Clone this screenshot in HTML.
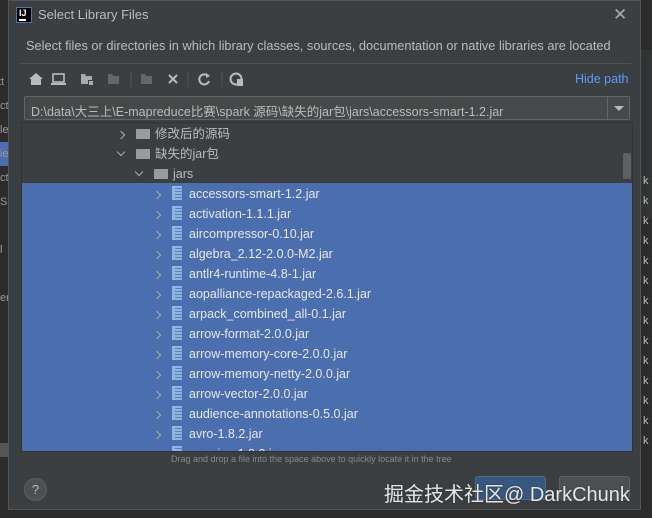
<!DOCTYPE html>
<html><head><meta charset="utf-8"><style>
*{margin:0;padding:0;box-sizing:border-box}
body{width:652px;height:518px;background:#2b2b2b;overflow:hidden;position:relative;font-family:"Liberation Sans","Noto Sans CJK SC",sans-serif;color:#bbbbbb}
.dlg{position:absolute;left:8px;top:0;width:633px;height:510px;background:#3c3f41;border:1px solid #555}
.abs{position:absolute}
.row{position:absolute;height:20px;line-height:20px;font-size:12.5px;color:#bbbbbb;white-space:nowrap}
.sel{color:#e8e8e8}
.chev{display:inline-block;width:6px;height:6px;border-right:1.5px solid #aaa;border-bottom:1.5px solid #aaa;transform:rotate(-45deg);margin-right:12px}
.chev.d{transform:rotate(45deg);margin-bottom:3px}
.fold{display:inline-block;width:14px;height:10px;background:#9a9a9a;margin-right:5px;vertical-align:-1px;border-top-left-radius:1px}
.jar{display:inline-block;width:10px;height:14px;background:repeating-linear-gradient(0deg,#8fb4e0 0 2px,#5a80c0 2px 3px);border-left:3px solid #8fb4e0;margin-right:7px;vertical-align:-2px}
.k{position:absolute;left:643px;font-size:11px;color:#bbb}
</style></head><body>
<div class="abs" style="left:0;top:70px;font-size:11px;color:#999;line-height:24px">
<div style="margin-left:-2px">tt</div><div>ct</div><div>le</div><div style="background:#4b6eaf;width:8px">ie</div><div>ct</div><div>Se</div><div>&nbsp;</div><div>l</div><div>&nbsp;</div><div>er</div></div>
<div class="abs" style="left:0;top:443px;width:8px;height:14px;background:#555"></div>
<div class="abs" style="left:641px;top:50px;width:11px;height:168px;background:#313335"></div>
<div class="k" style="top:175px">k</div><div class="k" style="top:195px">k</div><div class="k" style="top:215px">k</div><div class="k" style="top:235px">k</div><div class="k" style="top:255px">k</div><div class="k" style="top:275px">k</div><div class="k" style="top:295px">k</div><div class="k" style="top:315px">k</div><div class="k" style="top:335px">k</div><div class="k" style="top:355px">k</div><div class="k" style="top:375px">k</div><div class="k" style="top:395px">k</div><div class="k" style="top:415px">k</div><div class="k" style="top:435px">k</div>
<div class="dlg">
 <div class="abs" style="left:7px;top:6px;width:16px;height:16px;background:#000;border:1px solid #4a78b5;color:#fff;font-size:9px;font-weight:bold;line-height:10px;padding-left:2px">IJ<div style="width:7px;height:1.5px;background:#fff;margin-top:1px"></div></div>
 <div class="abs" style="left:29px;top:6px;font-size:13px;color:#bbb">Select Library Files</div>
 <div class="abs" style="left:604px;top:4px;font-size:17px;color:#aaa">✕</div>
 <div class="abs" style="left:17px;top:37px;font-size:12.8px;color:#bbb;white-space:nowrap">Select files or directories in which library classes, sources, documentation or native libraries are located</div>
 <div class="abs" style="left:12px;top:62px;width:610px;height:1px;background:#515151"></div>
 <svg class="abs" style="left:18px;top:69px" width="240" height="18">
  <path d="M2 9 L9 3 L16 9 H14 V15 H4 V9Z" fill="#bbb"/>
  <rect x="26" y="4" width="11" height="8" fill="none" stroke="#bbb" stroke-width="1.6"/><rect x="24" y="13" width="15" height="2" fill="#bbb"/>
  <path d="M54 4h4l1 2h6v8h-11z" fill="#aaa"/><rect x="61" y="10" width="5" height="5" fill="#3c3f41"/><rect x="62" y="11" width="4" height="4" fill="#aaa"/>
  <path d="M81 4h4l1 2h6v8h-11z" fill="#666"/>
  <line x1="104" y1="2" x2="104" y2="17" stroke="#555"/>
  <path d="M114 4h4l1 2h6v8h-11z" fill="#666"/>
  <path d="M142 5l8 8M150 5l-8 8" stroke="#bbb" stroke-width="2"/>
  <line x1="161" y1="2" x2="161" y2="17" stroke="#555"/>
  <path d="M181 6a5 5 0 1 0 1 5" fill="none" stroke="#bbb" stroke-width="2"/><path d="M179 3l4 3-4 2z" fill="#bbb"/>
  <line x1="195" y1="2" x2="195" y2="17" stroke="#555"/>
  <circle cx="209" cy="9" r="5.5" fill="none" stroke="#bbb" stroke-width="2"/><rect x="210" y="9" width="6" height="7" fill="#bbb"/>
 </svg>
 <div class="abs" style="left:566px;top:71px;font-size:12.5px;color:#589df6">Hide path</div>
 <div class="abs" style="left:15px;top:95px;width:606px;height:24px;background:#45494a;border:1px solid #646464;border-radius:2px"><div style="position:absolute;left:6px;top:4px;font-size:12.5px;color:#bbb;white-space:nowrap">D:\data\大三上\E-mapreduce比赛\spark 源码\缺失的jar包\jars\accessors-smart-1.2.jar</div><div style="position:absolute;right:0;top:0;width:22px;height:22px;border-left:1px solid #646464"><div style="position:absolute;left:6px;top:9px;border:5px solid transparent;border-top:5px solid #bbb"></div></div></div>
 <div class="abs" style="left:12px;top:121px;width:612px;height:330px;background:#3c3f41;border:1px solid #323232;overflow:hidden">
  <div class="abs" style="left:0;top:60px;width:612px;height:270px;background:#4b6eaf"></div>
  <div class="abs" style="left:601px;top:30px;width:8px;height:26px;background:#5e6163;border-radius:2px"></div>
  <div class="row" style="left:96px;top:1px"><span class="chev"></span><span class="fold"></span>修改后的源码</div>
  <div class="row" style="left:96px;top:21px"><span class="chev d"></span><span class="fold"></span>缺失的jar包</div>
  <div class="row" style="left:114px;top:41px"><span class="chev d"></span><span class="fold"></span>jars</div>
  <div class="row sel" style="left:132px;top:61px"><span class="chev"></span><span class="jar"></span>accessors-smart-1.2.jar</div>
  <div class="row sel" style="left:132px;top:81px"><span class="chev"></span><span class="jar"></span>activation-1.1.1.jar</div>
  <div class="row sel" style="left:132px;top:101px"><span class="chev"></span><span class="jar"></span>aircompressor-0.10.jar</div>
  <div class="row sel" style="left:132px;top:121px"><span class="chev"></span><span class="jar"></span>algebra_2.12-2.0.0-M2.jar</div>
  <div class="row sel" style="left:132px;top:141px"><span class="chev"></span><span class="jar"></span>antlr4-runtime-4.8-1.jar</div>
  <div class="row sel" style="left:132px;top:161px"><span class="chev"></span><span class="jar"></span>aopalliance-repackaged-2.6.1.jar</div>
  <div class="row sel" style="left:132px;top:181px"><span class="chev"></span><span class="jar"></span>arpack_combined_all-0.1.jar</div>
  <div class="row sel" style="left:132px;top:201px"><span class="chev"></span><span class="jar"></span>arrow-format-2.0.0.jar</div>
  <div class="row sel" style="left:132px;top:221px"><span class="chev"></span><span class="jar"></span>arrow-memory-core-2.0.0.jar</div>
  <div class="row sel" style="left:132px;top:241px"><span class="chev"></span><span class="jar"></span>arrow-memory-netty-2.0.0.jar</div>
  <div class="row sel" style="left:132px;top:261px"><span class="chev"></span><span class="jar"></span>arrow-vector-2.0.0.jar</div>
  <div class="row sel" style="left:132px;top:281px"><span class="chev"></span><span class="jar"></span>audience-annotations-0.5.0.jar</div>
  <div class="row sel" style="left:132px;top:301px"><span class="chev"></span><span class="jar"></span>avro-1.8.2.jar</div>
  <div class="row sel" style="left:132px;top:321px"><span class="chev"></span><span class="jar"></span>avro-ipc-1.8.2.jar</div>
 </div>
 <div class="abs" style="left:162px;top:453px;font-size:9px;color:#888;white-space:nowrap">Drag and drop a file into the space above to quickly locate it in the tree</div>
 <div class="abs" style="left:15px;top:477px;width:23px;height:23px;border-radius:50%;background:#4c5052;border:1px solid #5e6060;color:#bbb;font-size:13px;text-align:center;line-height:21px">?</div>
 <div class="abs" style="left:466px;top:475px;width:71px;height:24px;background:#365880;border:1px solid #4c708c;border-radius:3px"></div>
 <div class="abs" style="left:550px;top:475px;width:71px;height:24px;background:#4c5052;border:1px solid #5e6060;border-radius:3px"></div>
</div>
<div class="abs" style="left:384px;top:478px;font-size:20px;color:#e6e6e6;white-space:nowrap;text-shadow:0 0 2px #333">掘金技术社区@ DarkChunk</div>
</body></html>
